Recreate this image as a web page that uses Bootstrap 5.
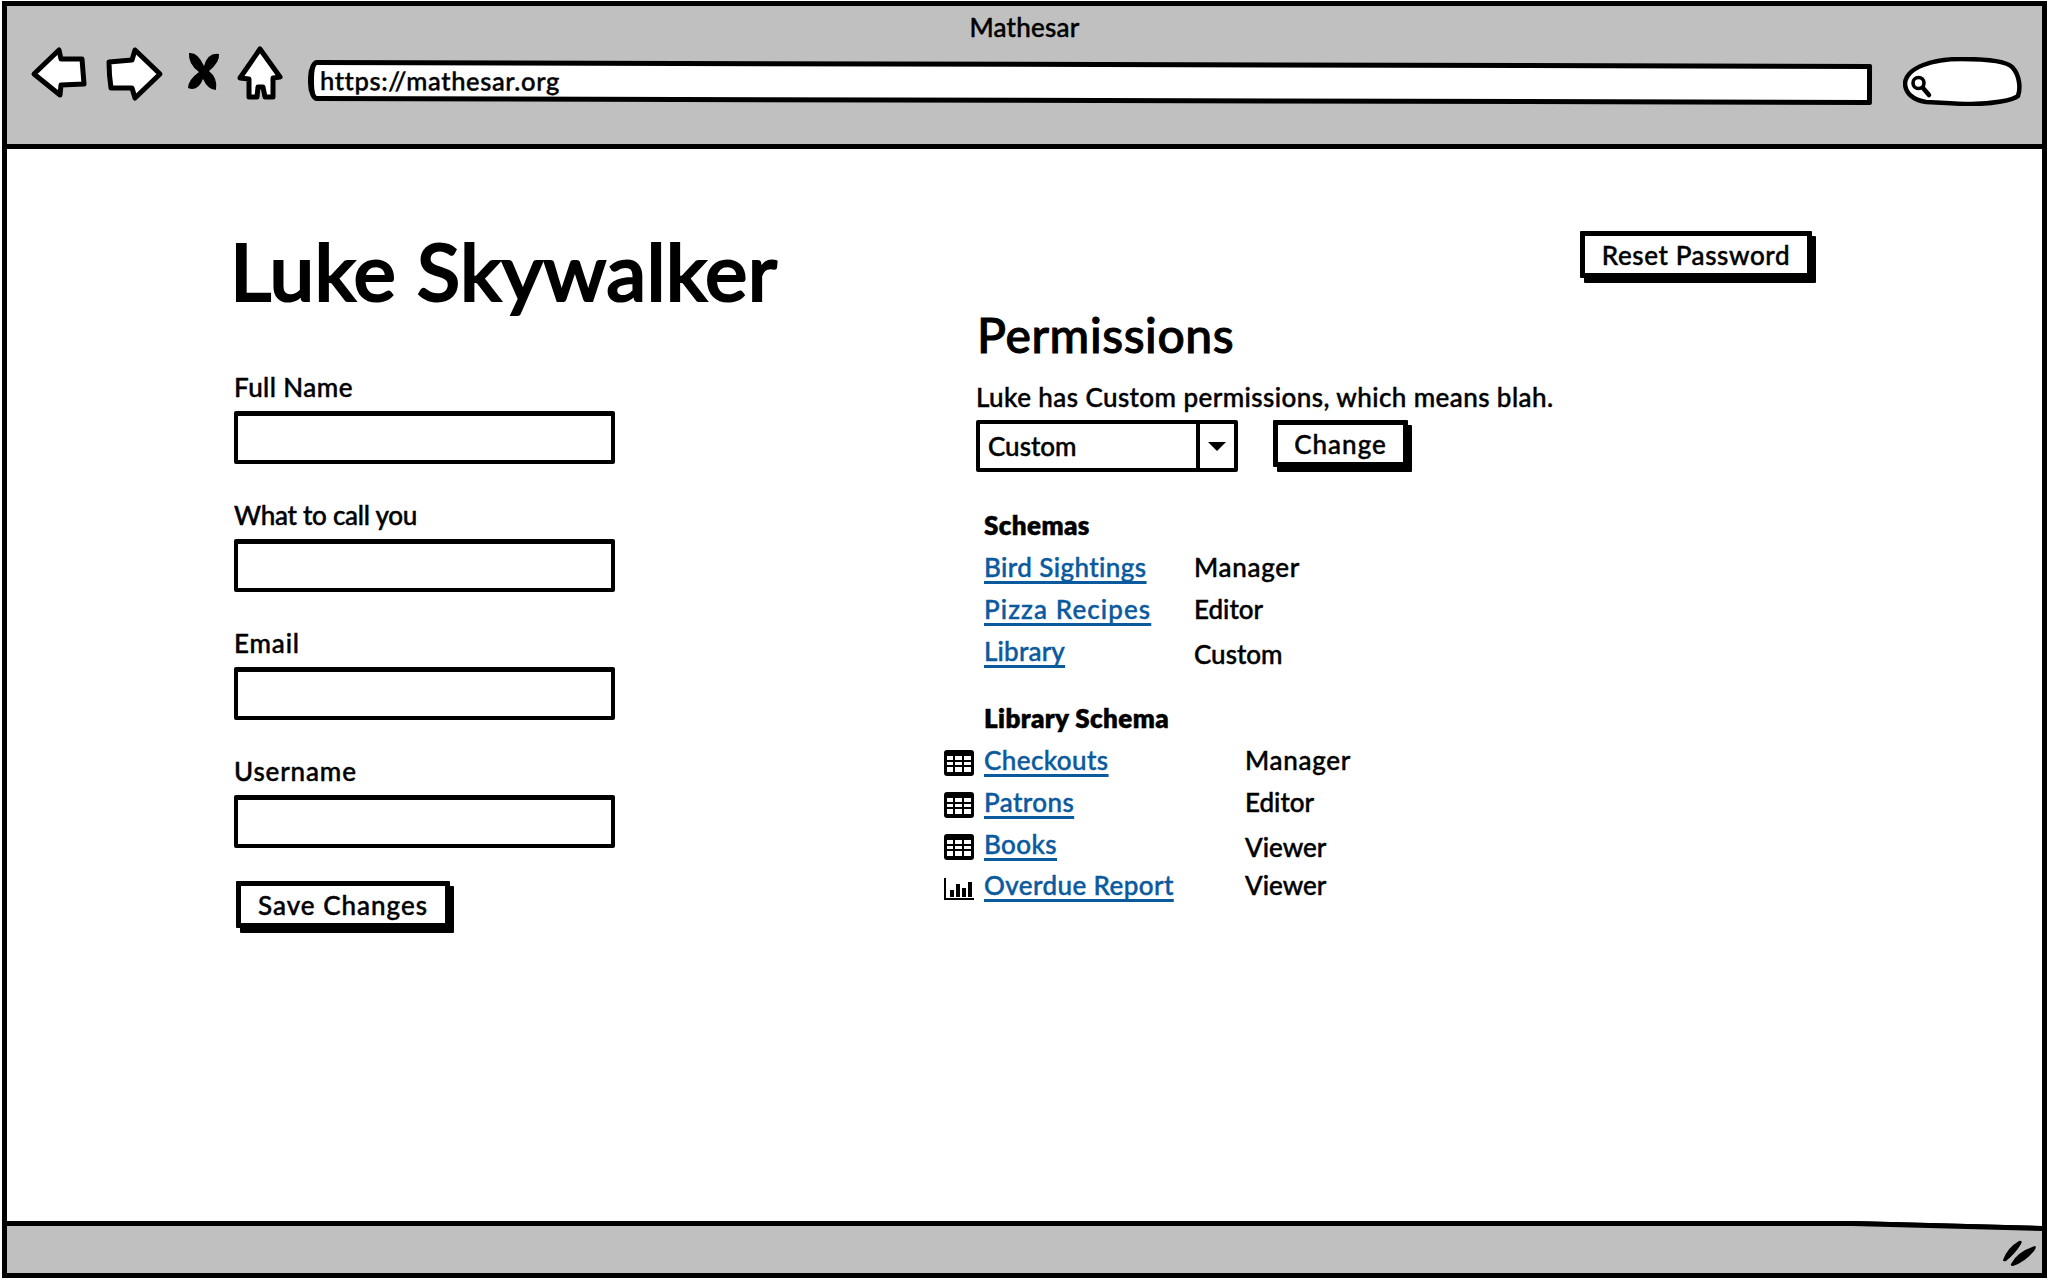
<!DOCTYPE html>
<html lang="en">
<head>
<meta charset="utf-8">
<title>Mathesar</title>
<link rel="stylesheet" href="https://cdn.jsdelivr.net/npm/bootstrap@5.3.0/dist/css/bootstrap.min.css">
<style>
html,body{margin:0;height:100%;background:#fff}
body{font-family:"Lato","Liberation Sans",sans-serif;color:#000;font-size:26px;line-height:30px;font-weight:500;overflow:hidden;letter-spacing:.42px;-webkit-text-stroke:.45px #000}
.bwin{margin:1px 1px 2px 2px;height:1277px;border:5px solid #000;display:flex;flex-direction:column}
.bhead{height:143px;background:#c0c0c0;border-bottom:5px solid #000;flex:none}
.btitle{padding-top:6px;line-height:30px;text-align:center;font-size:26px;letter-spacing:.25px}
.navrow{display:flex;align-items:flex-start;margin-top:2px;padding:0 20px 0 23px}
.navrow svg{display:block;flex:none;height:58px}
.nb{width:58px}
.nf{width:62px;margin-left:16px}
.nx{width:36px;margin-left:20px}
.nh{width:52px;margin-left:12px}
.urlbar{flex:1;height:41px;margin:18px 0 0 22px;background:#fff;border:5px solid #000;border-left-width:6px;border-radius:9px 2px 2px 9px/18px 2px 2px 18px;transform:rotate(.146deg);padding-left:6px;line-height:31px;font-size:25.5px;letter-spacing:.65px}
.navrow svg.nsearch{width:119px;height:49px;margin:13px 0 0 31px}
.bmain{flex:1;display:flex;min-height:0}
.colleft{width:969px;flex:none;padding-left:223px}
.pagename{font-size:80px;line-height:80px;font-weight:500;margin:81px 0 0;letter-spacing:.3px;-webkit-text-stroke:2.2px #000}
.fld{height:128px;padding-left:4px}
.fld label{display:block;line-height:30px;margin:0 0 9px}
.firstfld{margin-top:62px}
.sk-input.form-control{width:381px;height:53px;border:4px solid #000;border-top-width:5px;border-radius:2px;background:#fff;box-shadow:none;padding:0 8px}
.sk-btn.btn{background:#fff;color:#000;border:5px solid #000;border-radius:1px;box-shadow:4px 5px 0 #000;font-size:26px;line-height:30px;font-weight:500;padding:0;letter-spacing:1px}
.savebtn.btn{width:214px;height:47px;margin:-3px 0 0 6px}
.resetbtn.btn{width:232px;height:47px;letter-spacing:.6px}
.changebtn.btn{width:135px;height:47px;margin-left:35px}
.colright{flex:1;padding-right:230px}
.toprow{display:flex;justify-content:flex-end;padding-top:82px}
.permhead{font-size:48px;line-height:50px;font-weight:500;margin:32px 0 0 1px;letter-spacing:.6px;-webkit-text-stroke:1px #000}
.permtext{margin:22px 0 0;line-height:30px}
.permctl{display:flex;margin-top:8px}
.sk-select{width:262px;height:52px;border:4px solid #000;border-radius:2px;display:flex;background:#fff}
.sk-selval{width:220px;padding-left:8px;line-height:44px;border-right:4px solid #000;letter-spacing:0}
.sk-selarr{flex:1;display:flex;align-items:center;justify-content:center}
.sk-selarr svg{display:block;width:18px;height:9px}
.grp{padding-left:8px}
.grp1{margin-top:38px}
.grp2{margin-top:25px}
.grphead{font-weight:800;font-size:26px;line-height:30px;margin:0 0 12px;letter-spacing:.4px}
.prow{display:flex;height:42px;line-height:30px}
.prow.tightrow{height:41px}
.pname{width:210px;flex:none}
.grp2 .prow{margin-left:-40px}
.grp2 .pname{width:261px;flex:none;display:block}
.picon{width:30px;flex:none;margin-right:10px;display:flex;align-items:flex-start;padding-top:5px}
.picon svg{display:block;width:30px;height:26px}
a.plink{color:#0b5a9e;-webkit-text-stroke:.45px #0b5a9e;text-decoration:underline;text-decoration-thickness:3px;text-underline-offset:4px;text-decoration-skip-ink:none}
a.ls1{letter-spacing:1.1px}
a.ls2{letter-spacing:.2px}
.rolem{letter-spacing:.7px}
.role0{letter-spacing:0}
.lowrole{padding-top:3px}
.ls-t{letter-spacing:-.25px}
.ls-e{letter-spacing:.85px}
.bfoot{position:relative;height:52px;flex:none;background:#c0c0c0;border-top:5px solid #000}
.wedge{position:absolute;right:0;top:-5px;width:190px;height:10px;display:block}
.grip{position:absolute;right:5px;top:14px;width:34px;height:26px;display:block}
</style>
</head>
<body>
<div class="bwin">
  <header class="bhead">
    <div class="btitle">Mathesar</div>
    <div class="navrow">
      <svg class="nb" viewBox="30 44 58 58"><path d="M34 74 L59 50 L61 59 L82 59 L84 84 L61 85 L60 95 Z" fill="#fff" stroke="#000" stroke-width="5" stroke-linejoin="round"/></svg>
      <svg class="nf" viewBox="104 44 62 58"><path d="M109 62 L132 60 L135 50 L160 74 L135 98 L132 88 L111 88 Q109 75 109 62 Z" fill="#fff" stroke="#000" stroke-width="5" stroke-linejoin="round"/></svg>
      <svg class="nx" viewBox="186 44 36 58"><path d="M204 66 Q198 52 189 53 Q188 64 199 72 Q188 80 188 88 Q198 92 203 79 Q208 90 216 90 Q218 78 209 71 Q220 62 219 54 Q208 52 204 66 Z" fill="#000"/></svg>
      <svg class="nh" viewBox="234 44 52 58"><path d="M260 49 L280 77 L273 78 L273 97 L265 97 L263 87 L258 87 L257 97 L249 97 L249 79 L240 78 Z" fill="#fff" stroke="#000" stroke-width="5" stroke-linejoin="round"/></svg>
      <div class="urlbar">https://mathesar.org</div>
      <svg class="nsearch" viewBox="0 0 119 49"><path d="M2 26 C4 10 30 2 58 2 C85 2 105 4 110 11 C116 18 118 30 115 39 C110 43 90 47 68 47 C50 47 32 45 23 45 C10 43 2 36 2 26 Z" fill="#fff" stroke="#000" stroke-width="4.5"/><circle cx="15.5" cy="26" r="5.5" fill="none" stroke="#000" stroke-width="3.6"/><path d="M20 31 L26 38" stroke="#000" stroke-width="4.5" stroke-linecap="round"/></svg>
    </div>
  </header>
  <main class="bmain">
    <section class="colleft">
      <h1 class="pagename">Luke Skywalker</h1>
      <div class="firstfld">
        <div class="fld"><label for="f1">Full Name</label><input id="f1" class="form-control sk-input" type="text"></div>
        <div class="fld"><label for="f2" class="ls-t">What to call you</label><input id="f2" class="form-control sk-input" type="text"></div>
        <div class="fld"><label for="f3" class="ls-e">Email</label><input id="f3" class="form-control sk-input" type="text"></div>
        <div class="fld"><label for="f4" class="ls-e">Username</label><input id="f4" class="form-control sk-input" type="text"></div>
      </div>
      <button type="button" class="btn sk-btn savebtn">Save Changes</button>
    </section>
    <section class="colright">
      <div class="toprow"><button type="button" class="btn sk-btn resetbtn">Reset Password</button></div>
      <h2 class="permhead">Permissions</h2>
      <p class="permtext">Luke has Custom permissions, which means blah.</p>
      <div class="permctl">
        <div class="sk-select"><div class="sk-selval">Custom</div><div class="sk-selarr"><svg viewBox="0 0 18 9"><path d="M0 0H18L9 9Z" fill="#000"/></svg></div></div>
        <button type="button" class="btn sk-btn changebtn">Change</button>
      </div>
      <div class="grp grp1">
        <div class="grphead">Schemas</div>
        <div class="prow"><div class="pname"><a class="plink" href="#">Bird Sightings</a></div><div class="rolem">Manager</div></div>
        <div class="prow"><div class="pname"><a class="plink ls1" href="#">Pizza Recipes</a></div><div class="role0">Editor</div></div>
        <div class="prow"><div class="pname"><a class="plink ls2" href="#">Library</a></div><div class="role0 lowrole">Custom</div></div>
      </div>
      <div class="grp grp2">
        <div class="grphead">Library Schema</div>
        <div class="prow"><div class="picon"><svg viewBox="0 0 30 26"><rect width="30" height="26" rx="3" fill="#000"/><path d="M3 6h6v4H3zM11 6h7v4h-7zM20 6h7v4h-7zM3 12h6v3H3zM11 12h7v3h-7zM20 12h7v3h-7zM3 17h6v5H3zM11 17h7v5h-7zM20 17h7v5h-7z" fill="#fff"/></svg></div><div class="pname"><a class="plink" href="#">Checkouts</a></div><div class="rolem">Manager</div></div>
        <div class="prow"><div class="picon"><svg viewBox="0 0 30 26"><rect width="30" height="26" rx="3" fill="#000"/><path d="M3 6h6v4H3zM11 6h7v4h-7zM20 6h7v4h-7zM3 12h6v3H3zM11 12h7v3h-7zM20 12h7v3h-7zM3 17h6v5H3zM11 17h7v5h-7zM20 17h7v5h-7z" fill="#fff"/></svg></div><div class="pname"><a class="plink" href="#">Patrons</a></div><div class="role0">Editor</div></div>
        <div class="prow tightrow"><div class="picon"><svg viewBox="0 0 30 26"><rect width="30" height="26" rx="3" fill="#000"/><path d="M3 6h6v4H3zM11 6h7v4h-7zM20 6h7v4h-7zM3 12h6v3H3zM11 12h7v3h-7zM20 12h7v3h-7zM3 17h6v5H3zM11 17h7v5h-7zM20 17h7v5h-7z" fill="#fff"/></svg></div><div class="pname"><a class="plink" href="#">Books</a></div><div class="role0 lowrole">Viewer</div></div>
        <div class="prow"><div class="picon"><svg viewBox="0 0 30 26"><path d="M1 3V24H31" fill="none" stroke="#000" stroke-width="2"/><path d="M6 15h4v7H6zM12 9h4v13h-4zM18 13h4v9h-4zM24 7h4v15h-4z" fill="#000"/></svg></div><div class="pname"><a class="plink" href="#">Overdue Report</a></div><div class="role0">Viewer</div></div>
      </div>
    </section>
  </main>
  <footer class="bfoot">
    <svg class="wedge" viewBox="0 0 190 10" preserveAspectRatio="none"><path d="M0 0 L190 0 L190 5 Z" fill="#fff"/><path d="M0 0 L190 5 L190 10 L0 5 Z" fill="#000"/></svg>
    <svg class="grip" viewBox="0 0 34 26"><path d="M0 20 Q4 8 16 1 Q20 0 18 4 Q12 14 3 21 Q0 22 0 20 Z M8 24 Q14 12 32 6 Q34 7 31 11 Q22 22 10 26 Q7 26 8 24 Z" fill="#000"/></svg>
  </footer>
</div>
</body>
</html>
